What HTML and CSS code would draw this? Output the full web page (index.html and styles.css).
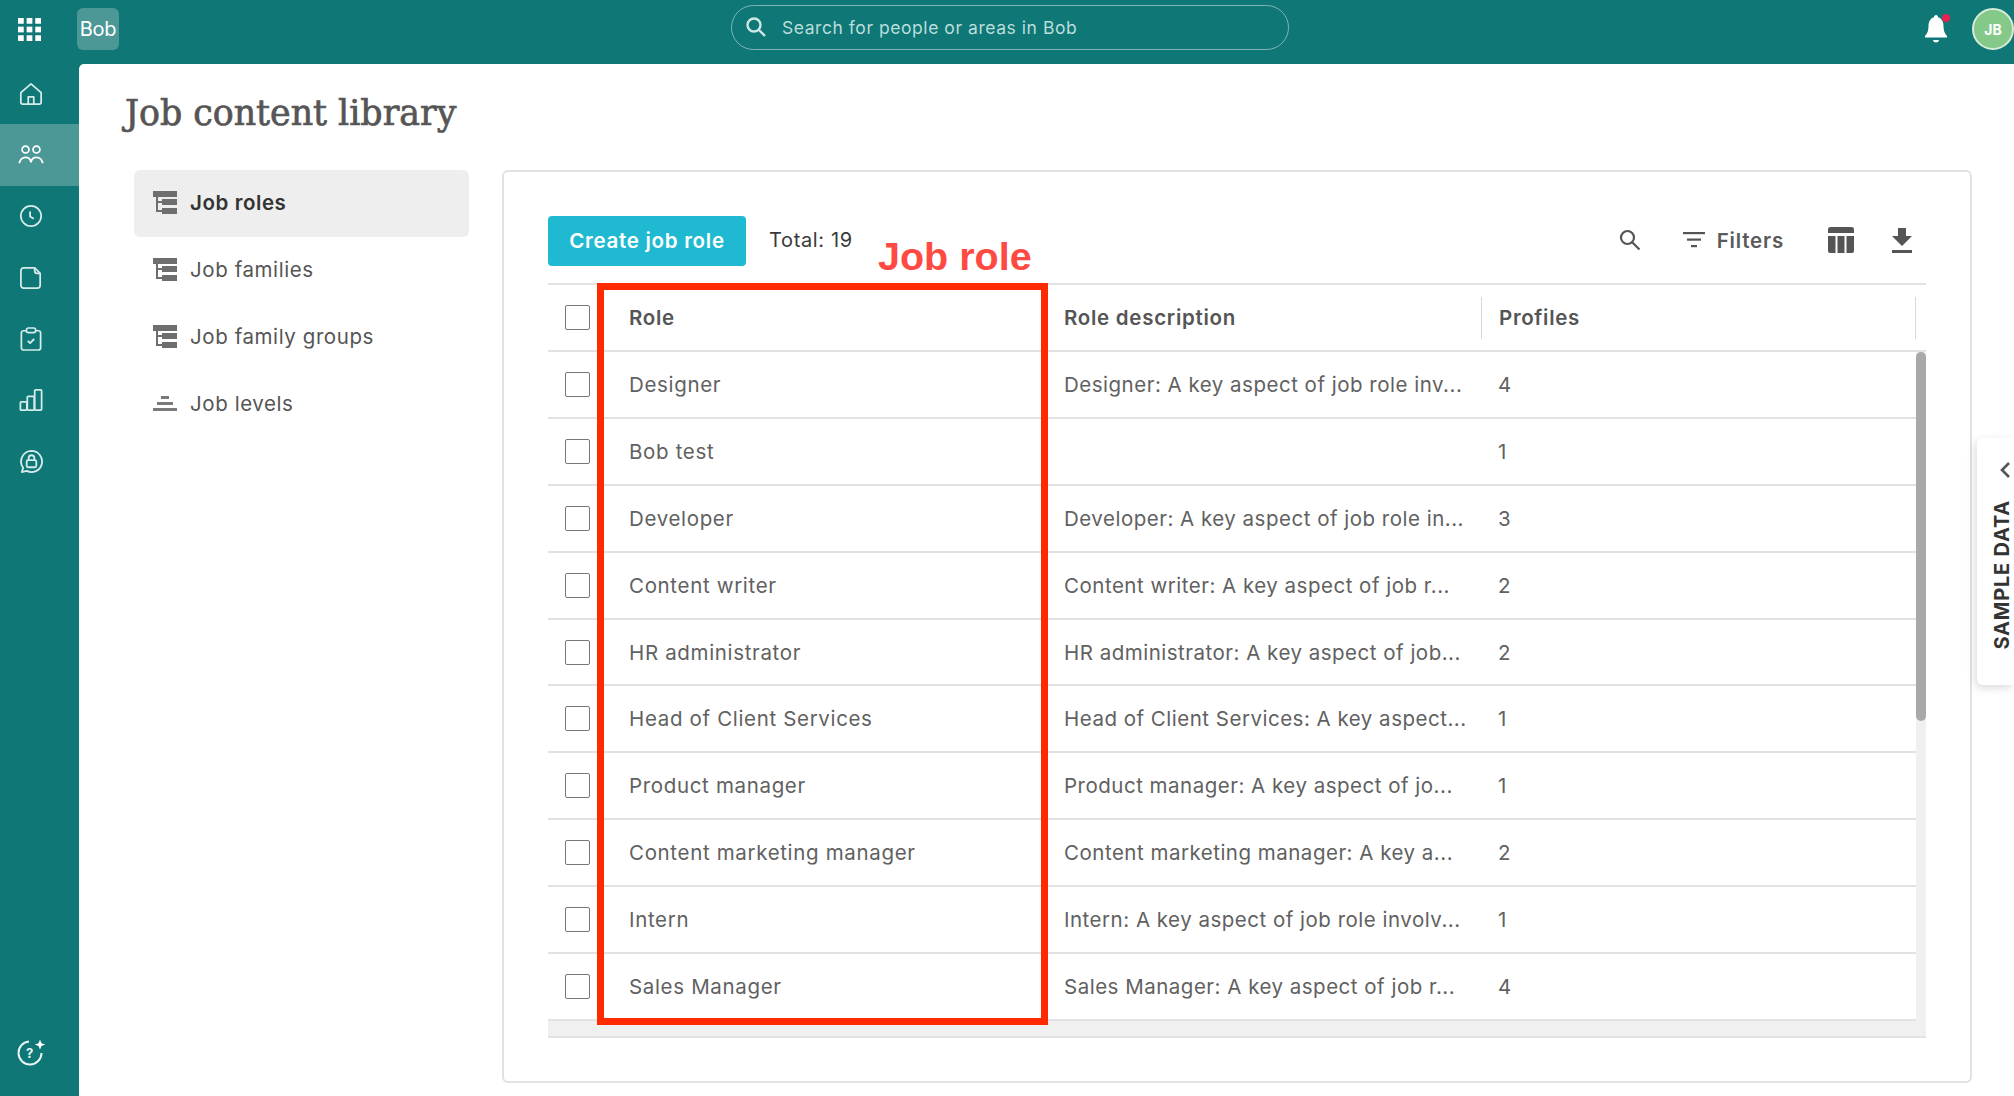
FILE: index.html
```html
<!DOCTYPE html>
<html lang="en">
<head>
<meta charset="utf-8">
<title>Job content library</title>
<link rel="stylesheet" href="styles.css">
</head>
<body>
<header class="topbar">
  <div class="apps">
    <svg width="23" height="23" viewBox="0 0 24 24" fill="#fff"><rect x="0" y="0" width="6" height="6"/><rect x="9" y="0" width="6" height="6"/><rect x="18" y="0" width="6" height="6"/><rect x="0" y="9" width="6" height="6"/><rect x="9" y="9" width="6" height="6"/><rect x="18" y="9" width="6" height="6"/><rect x="0" y="18" width="6" height="6"/><rect x="9" y="18" width="6" height="6"/><rect x="18" y="18" width="6" height="6"/></svg>
  </div>
  <div class="logo">Bob</div>
  <div class="search">
    <svg width="22" height="22" viewBox="0 0 22 22" fill="none" stroke="#cfe8e5" stroke-width="2.400"><circle cx="9" cy="9" r="6.500"/><path d="M14 14l6 6"/></svg>
    <span>Search for people or areas in Bob</span>
  </div>
  <div class="top-right">
    <div class="bell">
      <svg width="24" height="30" viewBox="0 0 24 30" fill="#fff"><path d="M12 1c1.300 0 2 1 2 2.200 4 1.300 5.500 4.800 5.500 8.800 0 4 .8 7 3.500 10v1.500H1V22c2.700-3 3.500-6 3.500-10 0-4 1.500-7.500 5.500-8.800C10 2 10.700 1 12 1z"/><path d="M9 26h6c0 1.500-1.300 2.500-3 2.500S9 27.500 9 26z"/></svg>
      <span class="dot"></span>
    </div>
    <div class="avatar">JB</div>
  </div>
</header>
<div class="body-row">
  <nav class="rail">
    <div class="rail-list">
      <a class="rail-item"><svg width="24" height="24" viewBox="0 0 26 26" fill="none" stroke="#d5ecea" stroke-width="1.900" stroke-linejoin="round"><path d="M2 11.500 13 2l11 9.500V22a2 2 0 0 1-2 2H4a2 2 0 0 1-2-2z"/><path d="M10 24v-8h6v8"/></svg></a>
      <a class="rail-item on"><svg width="26" height="20" viewBox="0 0 28 22" fill="none" stroke="#fff" stroke-width="1.900"><circle cx="8" cy="5" r="3.800"/><circle cx="20" cy="5" r="3.800"/><path d="M1 20c1-4 4-6.500 7-6.500s5.500 2 6 5.500c.5-3.500 3-5.500 6-5.500s6 2.500 7 6.500"/></svg></a>
      <a class="rail-item"><svg width="24" height="24" viewBox="0 0 26 26" fill="none" stroke="#d5ecea" stroke-width="1.900"><circle cx="13" cy="13" r="11"/><path d="M12 8v5.500l4 2.500" stroke-width="2"/></svg></a>
      <a class="rail-item"><svg width="22" height="24" viewBox="0 0 24 26" fill="none" stroke="#d5ecea" stroke-width="1.900" stroke-linejoin="round"><path d="M4 2h12l6 6v13a3 3 0 0 1-3 3H4a3 3 0 0 1-3-3V5a3 3 0 0 1 3-3z"/><path d="M16 2v3a3 3 0 0 0 3 3h3"/></svg></a>
      <a class="rail-item"><svg width="22" height="24" viewBox="0 0 24 26" fill="none" stroke="#d5ecea" stroke-width="1.900" stroke-linejoin="round"><rect x="1.500" y="4" width="21" height="21" rx="2.500"/><rect x="7" y="1" width="10" height="5" rx="2" fill="#0f7776"/><path d="M8.500 15l2.500 2.500 4.500-4.500" stroke-width="2"/></svg></a>
      <a class="rail-item"><svg width="24" height="24" viewBox="0 0 26 26" fill="none" stroke="#d5ecea" stroke-width="1.900" stroke-linejoin="round"><rect x="1.500" y="15" width="7" height="9" rx="1"/><rect x="9" y="9" width="7.500" height="15" rx="1"/><rect x="17" y="2" width="7.500" height="22" rx="1"/></svg></a>
      <a class="rail-item"><svg width="25" height="25" viewBox="0 0 26 26" fill="none" stroke="#d5ecea" stroke-width="1.900" stroke-linejoin="round"><path d="M13 2a11 11 0 1 1-5 20.800L3 24l1.300-4.500A11 11 0 0 1 13 2z"/><rect x="8" y="11.500" width="10" height="7.500" rx="1.500"/><path d="M10 11.500V9.500a3 3 0 0 1 6 0v2"/></svg></a>
    </div>
    <a class="rail-help"><svg width="30" height="28" viewBox="0 0 30 28" fill="none" stroke="#e8f5f3" stroke-width="2"><path d="M13 3.500A11.500 11.500 0 1 0 25.500 15"/><path d="M24 1.500l1.500 3.700 3.700 1.300-3.700 1.500L24 11.500l-1.500-3.500-3.700-1.500 3.700-1.300z" fill="#fff" stroke="none"/><text x="14" y="20" class="help-q">?</text></svg></a>
  </nav>
  <main class="main">
    <h1 class="title">Job content library</h1>
    <div class="columns">
      <aside class="side">
        <a class="side-item active"><svg class="tree" viewBox="0 0 24 24"><use href="#tree"/></svg>Job roles</a>
        <a class="side-item"><svg class="tree" viewBox="0 0 24 24"><use href="#tree"/></svg>Job families</a>
        <a class="side-item"><svg class="tree" viewBox="0 0 24 24"><use href="#tree"/></svg>Job family groups</a>
        <a class="side-item"><svg class="tree" viewBox="0 0 24 24" fill="#7a7a7a"><rect x="8" y="4" width="8" height="3"/><rect x="4" y="10" width="16" height="3"/><rect x="0" y="16" width="24" height="3"/></svg>Job levels</a>
      </aside>
      <section class="card">
        <div class="toolbar">
          <button class="create">Create job role</button>
          <span class="total">Total: 19</span>
          <div class="tools">
            <svg class="t-search" width="22" height="22" viewBox="0 0 22 22" fill="none" stroke="#555" stroke-width="2.200"><circle cx="8.500" cy="8.500" r="6.500"/><path d="M13 13l7.500 7.500"/></svg>
            <span class="filters"><svg width="22" height="16" viewBox="0 0 22 16" fill="#555"><rect width="22" height="2.200"/><rect x="4" y="6.500" width="14" height="2.200"/><rect x="8" y="13" width="6" height="2.200"/></svg>Filters</span>
            <svg class="t-cols" width="26" height="26" viewBox="0 0 26 26" fill="#555"><path d="M2.500 0h21A2.500 2.500 0 0 1 26 2.500V6H0V2.500A2.500 2.500 0 0 1 2.500 0z"/><path d="M0 9h7.500v17H2a2 2 0 0 1-2-2z"/><rect x="9.500" y="9" width="7" height="17"/><path d="M18.500 9H26v15a2 2 0 0 1-2 2h-5.500z"/></svg>
            <svg class="t-down" width="20" height="25" viewBox="0 0 20 25" fill="#555"><path d="M6 0h8v8h6l-10 10L0 8h6z"/><rect y="22" width="20" height="3"/></svg>
          </div>
        </div>
        <div class="table">
          <div class="row head">
            <div class="cell check"><span class="box"></span></div>
            <div class="cell role">Role</div>
            <div class="cell desc">Role description</div>
            <div class="cell prof">Profiles</div>
          </div>
          <div class="scroller">
            <div class="rows">
              <div class="row"><div class="cell check"><span class="box"></span></div><div class="cell role">Designer</div><div class="cell desc">Designer: A key aspect of job role inv...</div><div class="cell prof">4</div></div>
              <div class="row"><div class="cell check"><span class="box"></span></div><div class="cell role">Bob test</div><div class="cell desc"></div><div class="cell prof">1</div></div>
              <div class="row"><div class="cell check"><span class="box"></span></div><div class="cell role">Developer</div><div class="cell desc">Developer: A key aspect of job role in...</div><div class="cell prof">3</div></div>
              <div class="row"><div class="cell check"><span class="box"></span></div><div class="cell role">Content writer</div><div class="cell desc">Content writer: A key aspect of job r...</div><div class="cell prof">2</div></div>
              <div class="row"><div class="cell check"><span class="box"></span></div><div class="cell role">HR administrator</div><div class="cell desc">HR administrator: A key aspect of job...</div><div class="cell prof">2</div></div>
              <div class="row"><div class="cell check"><span class="box"></span></div><div class="cell role">Head of Client Services</div><div class="cell desc">Head of Client Services: A key aspect...</div><div class="cell prof">1</div></div>
              <div class="row"><div class="cell check"><span class="box"></span></div><div class="cell role">Product manager</div><div class="cell desc">Product manager: A key aspect of jo...</div><div class="cell prof">1</div></div>
              <div class="row"><div class="cell check"><span class="box"></span></div><div class="cell role">Content marketing manager</div><div class="cell desc">Content marketing manager: A key a...</div><div class="cell prof">2</div></div>
              <div class="row"><div class="cell check"><span class="box"></span></div><div class="cell role">Intern</div><div class="cell desc">Intern: A key aspect of job role involv...</div><div class="cell prof">1</div></div>
              <div class="row"><div class="cell check"><span class="box"></span></div><div class="cell role">Sales Manager</div><div class="cell desc">Sales Manager: A key aspect of job r...</div><div class="cell prof">4</div></div>
            </div>
            <div class="vtrack"><div class="vthumb"></div></div>
          </div>
          <div class="htrack"></div>
          <div class="redbox"></div>
          <div class="redlabel">Job role</div>
        </div>
      </section>
    </div>
    <aside class="sample">
      <svg width="12" height="18" viewBox="0 0 12 18" class="chev" fill="none" stroke="#555" stroke-width="2.600"><path d="M10 2 3 9l7 7"/></svg>
      <span class="sample-text">SAMPLE DATA</span>
    </aside>
  </main>
</div>
<svg class="defs" width="0" height="0"><defs><g id="tree" fill="#6e6e6e"><rect x="0" y="0" width="24" height="6"/><rect x="9" y="8" width="15" height="6"/><rect x="9" y="17" width="15" height="6"/><rect x="3" y="6" width="2" height="15"/><rect x="3" y="10" width="6" height="2"/><rect x="3" y="19" width="6" height="2"/></g></defs></svg>
</body>
</html>
```

FILE: styles.css
```css
* { box-sizing: border-box; }
html, body { margin: 0; height: 100%; }
body {
  width: 2014px;
  height: 1096px;
  overflow: hidden;
  background: #0f7776;
  font-family: "Inter", "Liberation Sans", sans-serif;
  color: #616161;
  letter-spacing: .66px;
  display: flex;
  flex-direction: column;
}
.defs { position: absolute; }

/* top bar */
.topbar { height: 64px; flex: none; display: flex; align-items: center; position: relative; padding-bottom: 6px; }
.apps { width: 77px; padding-left: 18px; display: flex; align-items: center; height: 100%; }
.logo {
  width: 42px; height: 42px; border-radius: 6px; background: #4b9896; color: #fff;
  font-size: 20px; display: flex; align-items: center; justify-content: center; letter-spacing: -.2px;
}
.search {
  margin: -4px 0 0 612px; width: 558px; height: 45px; border: 1.500px solid #7db6b4; border-radius: 23px;
  display: flex; align-items: center; gap: 15px; padding-left: 13px; color: #b9dedb; font-size: 17.500px; letter-spacing: .55px;
}
.top-right { margin-left: auto; display: flex; align-items: center; gap: 24px; width: 90px; }
.bell { position: relative; width: 24px; height: 30px; }
.bell svg { display: block; }
.dot { position: absolute; right: -2px; top: 0; width: 8px; height: 8px; border-radius: 50%; background: #e8234f; }
.avatar {
  width: 42px; height: 42px; border-radius: 50%; background: #85c98a; border: 2px solid #d7ecd9;
  color: #fff; font-size: 14px; font-weight: 700; display: flex; align-items: center; justify-content: center; flex: none; letter-spacing: 0;
}

/* rail */
.body-row { flex: 1; display: flex; min-height: 0; }
.rail { width: 79px; flex: none; display: flex; flex-direction: column; justify-content: space-between; padding-bottom: 30px; }
.rail-list { margin-top: -1px; display: flex; flex-direction: column; }
.rail-item { height: 61.300px; display: flex; align-items: center; justify-content: center; padding-right: 17px; }
.rail-item.on { background: #4b9896; }
.rail-help { display: flex; justify-content: center; padding-right: 17px; }
.help-q { font-size: 13px; font-weight: 700; fill: #e8f5f3; stroke: none; text-anchor: middle; }

/* main */
.main { flex: 1; background: #fff; border-top-left-radius: 5px; position: relative; padding: 0 42px 13px 45px; display: flex; flex-direction: column; }
.title { margin: 27px 0 0 1px; height: 79px; font-family: "DejaVu Serif", serif; font-weight: 400; font-size: 34.800px; line-height: 44px; color: #555; letter-spacing: 0; -webkit-text-stroke: .7px #555; white-space: nowrap; }
.columns { flex: 1; display: flex; min-height: 0; }

.side { width: 378px; padding-left: 10px; flex: none; display: flex; flex-direction: column; }
.side-item { width: 335px; height: 67px; flex: none; border-radius: 6px; display: flex; align-items: center; gap: 13px; padding: 0 0 2px 19px; font-size: 20.500px; color: #555; letter-spacing: .58px; }
.side-item.active { background: #eeeeee; color: #333; font-weight: 600; }
.tree { width: 24px; height: 24px; flex: none; }

.card { flex: 1; border: 2px solid #e2e2e2; border-radius: 6px; padding: 44px; display: flex; flex-direction: column; min-width: 0; }
.toolbar { height: 67px; flex: none; display: flex; align-items: flex-start; }
.create { width: 198px; height: 50px; border: 0; border-radius: 4px; background: #1fb9d1; color: #fff; font: 600 20.500px "Inter", "Liberation Sans", sans-serif; letter-spacing: .72px; padding: 0 0 2px; }
.total { margin-left: 23px; line-height: 48px; font-size: 20px; color: #3a3a3a; }
.tools { margin-left: auto; display: flex; align-items: center; height: 48px; padding-right: 14px; }
.t-search { margin-right: 42px; }
.filters { display: flex; align-items: center; gap: 12px; font-weight: 600; font-size: 20.500px; color: #5a5a5a; margin-right: 44px; letter-spacing: .8px; }
.t-cols { margin-right: 38px; }

.table { position: relative; flex: 1; border-top: 2px solid #e2e2e2; }
.row { display: grid; grid-template-columns: 81px 435px 416.500px 1fr; height: 66.900px; border-bottom: 2px solid #e2e2e2; align-items: center; }
.head { height: 67px; padding-right: 10px; font-weight: 600; color: #555; position: relative; }
.cell { white-space: nowrap; font-size: 20.500px; }
.desc { letter-spacing: .5px; }
.head .desc { letter-spacing: .72px; }
.prof { padding-left: 17.500px; }
.head .prof { border-left: 1px solid #d9d9d9; border-right: 1px solid #d9d9d9; height: 42px; line-height: 42px; }
.check { display: flex; padding-left: 17px; }
.box { width: 25px; height: 25px; border: 1.500px solid #777; border-radius: 2px; display: block; background: #fff; }
.scroller { display: flex; height: 669px; }
.rows { flex: 1; min-width: 0; }
.vtrack { width: 10px; flex: none; background: #f0f0f0; }
.vthumb { width: 10px; height: 369px; background: #a9a9a9; border-radius: 5px; }
.htrack { height: 17px; background: #f0f0f0; border-bottom: 2px solid #e2e2e2; }

/* annotations */
.redbox { position: absolute; left: 49px; top: -2px; width: 451px; height: 742px; border: 7px solid #ff2a00; pointer-events: none; }
.redlabel { position: absolute; left: 330px; top: -52px; font-family: "Liberation Sans", sans-serif; font-weight: 700; font-size: 39.500px; line-height: 46px; color: #ff4a43; white-space: nowrap; letter-spacing: 0; }

.sample {
  position: absolute; right: 0; top: 374px; width: 37px; height: 247px; background: #fff; border-radius: 6px 0 0 6px;
  box-shadow: -2px 3px 10px rgba(0,0,0,.14); overflow: hidden; display: flex; flex-direction: column; align-items: flex-start;
}
.chev { margin: 23px 0 0 22px; flex: none; }
.sample-text {
  writing-mode: vertical-rl; transform: rotate(180deg); font-weight: 700; font-size: 20px; color: #333; margin: 21px 0 0 13px; white-space: nowrap; line-height: 24px; letter-spacing: .8px;
}
```
